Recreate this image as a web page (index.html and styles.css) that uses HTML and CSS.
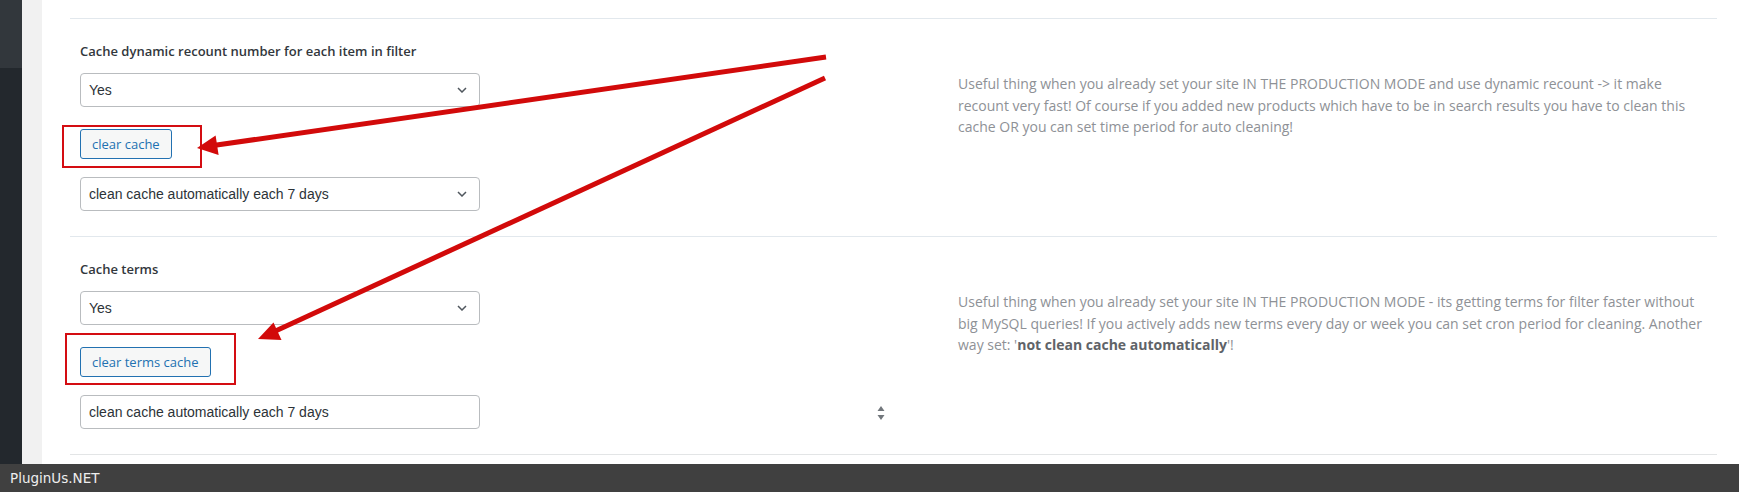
FILE: index.html
```html
<!DOCTYPE html>
<html lang="en">
<head>
<meta charset="utf-8">
<title>Cache settings</title>
<link rel="stylesheet" href="styles.css">
</head>
<body>
<div class="screen">
  <div class="workspace">
    <aside class="sidebar">
      <div class="sidebar-top"></div>
      <div class="sidebar-rest"></div>
    </aside>
    <div class="gutter"></div>
    <main class="main">
      <div class="top-gap"></div>

      <section class="setting">
        <h4 class="setting-label">Cache dynamic recount number for each item in filter</h4>
        <div class="controls">
          <div class="select">
            <span class="select-value">Yes</span>
            <svg class="chevron" viewBox="0 0 10 6" width="10" height="6"><path d="M1 1 L5 5 L9 1" fill="none" stroke="#50575e" stroke-width="1.5"/></svg>
          </div>
          <div class="button-wrap">
            <button class="wp-button">clear cache</button>
            <span class="mark mark-one"></span>
          </div>
          <div class="select">
            <span class="select-value">clean cache automatically each 7 days</span>
            <svg class="chevron" viewBox="0 0 10 6" width="10" height="6"><path d="M1 1 L5 5 L9 1" fill="none" stroke="#50575e" stroke-width="1.5"/></svg>
          </div>
        </div>
        <p class="description">Useful thing when you already set your site IN THE PRODUCTION MODE and use dynamic recount -&gt; it make<br>recount very fast! Of course if you added new products which have to be in search results you have to clean this<br>cache OR you can set time period for auto cleaning!</p>
      </section>

      <section class="setting">
        <h4 class="setting-label">Cache terms</h4>
        <div class="controls">
          <div class="select">
            <span class="select-value">Yes</span>
            <svg class="chevron" viewBox="0 0 10 6" width="10" height="6"><path d="M1 1 L5 5 L9 1" fill="none" stroke="#50575e" stroke-width="1.5"/></svg>
          </div>
          <div class="button-wrap">
            <button class="wp-button">clear terms cache</button>
            <span class="mark mark-two"></span>
          </div>
          <div class="input-row">
            <div class="text-input">clean cache automatically each 7 days</div>
            <span class="spinner">
              <svg viewBox="0 0 8 15" width="8" height="15"><path d="M4 0 L7.5 5 L0.5 5 Z M0.5 9 L7.5 9 L4 14 Z" fill="#72777c"/></svg>
            </span>
          </div>
        </div>
        <p class="description">Useful thing when you already set your site IN THE PRODUCTION MODE - its getting terms for filter faster without<br>big MySQL queries! If you actively adds new terms every day or week you can set cron period for cleaning. Another<br>way set: '<b>not clean cache automatically</b>'!</p>
      </section>
      <div class="setting-end"></div>
    </main>
  </div>
  <footer class="brand-bar">PluginUs.NET</footer>

  <svg class="annotations" width="1739" height="492" viewBox="0 0 1739 492">
    <line x1="826" y1="57" x2="215" y2="145.3" stroke="#d20a0a" stroke-width="5"/>
    <polygon points="197,148 218.6,155 215.6,135.5" fill="#d20a0a"/>
    <line x1="825" y1="78" x2="276" y2="330.7" stroke="#d20a0a" stroke-width="5"/>
    <polygon points="258,339 281.5,340 273.5,322.6" fill="#d20a0a"/>
  </svg>
</div>
</body>
</html>
```
FILE: styles.css
```css
* { box-sizing: border-box; }
html, body { margin: 0; padding: 0; }
body {
  background: #ffffff;
  font-family: "Open Sans", "Liberation Sans", sans-serif;
  color: #23282d;
}
.screen {
  position: relative;
  width: 1739px;
  height: 492px;
  overflow: hidden;
  display: flex;
  flex-direction: column;
}
.workspace {
  display: flex;
  height: 464px;
}
.sidebar {
  width: 22px;
  flex-shrink: 0;
  display: flex;
  flex-direction: column;
}
.sidebar-top { height: 68px; background: #32373c; }
.sidebar-rest { flex: 1; background: #23282d; }
.gutter { width: 20px; flex-shrink: 0; background: #f1f1f1; }
.main {
  flex: 1;
  min-width: 0;
  background: #ffffff;
  padding: 0 22px 0 28px;
}
.top-gap { height: 18px; }
.setting {
  border-top: 1px solid #e2e8ed;
  display: grid;
  grid-template-columns: 888px minmax(0, 1fr);
  grid-template-rows: auto auto;
  padding: 22px 0 25px 0;
}
.setting-end { border-top: 1px solid #e3e5e6; }
.setting-label {
  grid-column: 1;
  grid-row: 1;
  margin: 0;
  padding-left: 10px;
  font-size: 13px;
  line-height: 20px;
  font-weight: 600;
  color: #32373c;
}
.controls {
  grid-column: 1;
  grid-row: 2;
  padding-left: 10px;
  padding-top: 12px;
  display: flex;
  flex-direction: column;
  align-items: flex-start;
}
.description {
  grid-column: 2;
  grid-row: 2;
  min-width: 0;
  margin: 0;
  padding: 12px 0 0 0;
  font-size: 14px;
  line-height: 21.5px;
  white-space: nowrap;
  color: #8e9196;
}
.description b { color: #5f6368; font-weight: 700; }
.select, .text-input {
  width: 400px;
  height: 34px;
  border: 1px solid #b9bcbf;
  border-radius: 4px;
  background: #fff;
  font-family: "Liberation Sans", Arial, sans-serif;
  font-size: 14px;
  color: #2c3338;
  display: flex;
  align-items: center;
  padding: 0 8px;
}
.select { justify-content: space-between; }
.chevron { margin-right: 4px; }
.button-wrap {
  position: relative;
  margin: 22px 0 18px 0;
}
.wp-button {
  height: 30px;
  padding: 0 11px;
  border: 1px solid #2271b1;
  border-radius: 3px;
  background: #f6f7f7;
  color: #2271b1;
  font-family: "Open Sans", sans-serif;
  font-size: 13px;
  line-height: 28px;
  cursor: pointer;
}
.mark {
  position: absolute;
  border: 2px solid #d40d12;
  pointer-events: none;
}
.mark-one { left: -18px; top: -4px; width: 140px; height: 43px; }
.mark-two { left: -15px; top: -14px; width: 171px; height: 52px; }
.input-row {
  display: flex;
  align-items: center;
}
.spinner {
  margin-left: 397px;
  display: flex;
  margin-top: 2px;
}
.brand-bar {
  height: 28px;
  background: #404040;
  color: #eeeeee;
  font-family: "DejaVu Sans", sans-serif;
  font-size: 13.5px;
  line-height: 28px;
  padding-left: 10px;
}
.annotations {
  position: absolute;
  left: 0;
  top: 0;
  pointer-events: none;
}
```
